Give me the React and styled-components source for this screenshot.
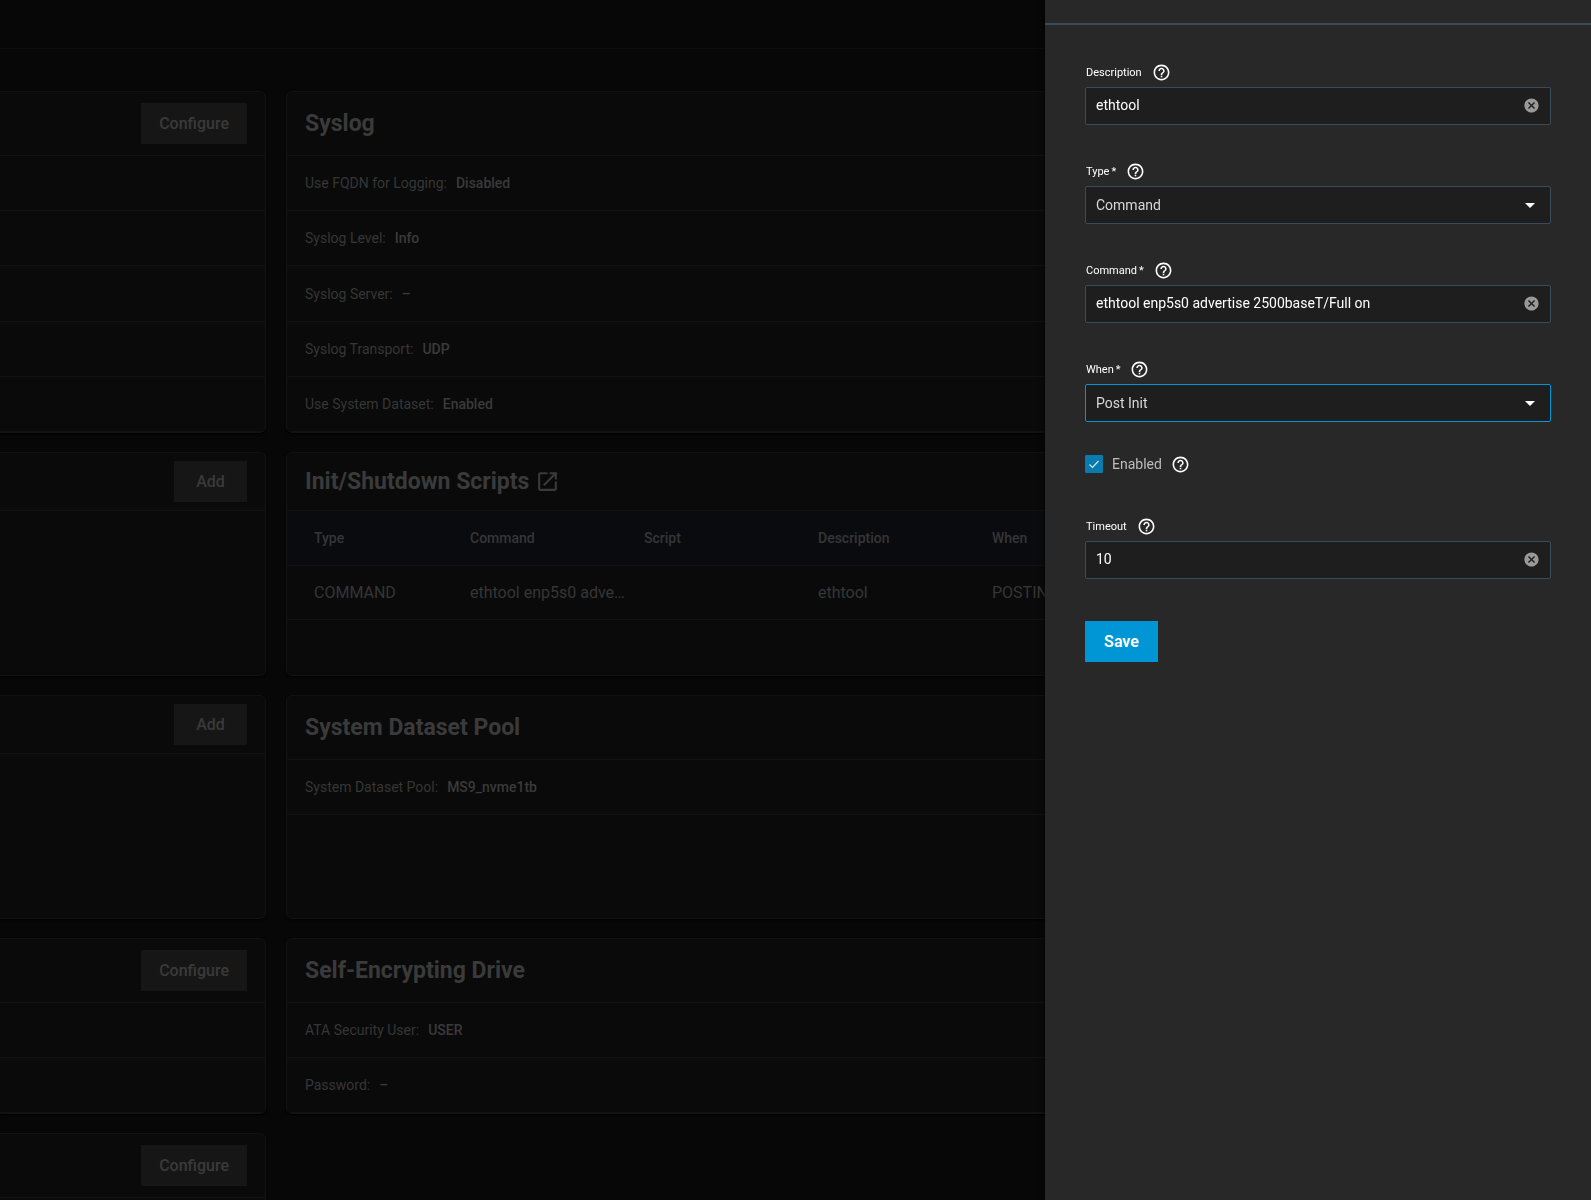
import { useState } from 'react';
import styled, { createGlobalStyle, ThemeProvider } from 'styled-components';
import { MdArrowDropDown, MdCancel, MdHelpOutline, MdOpenInNew } from 'react-icons/md';

const theme = {
	page: '#070707',
	card: '#0a0a0a',
	line: '#111213',
	tableHead: '#0a0b0e',
	muted: '#363636',
	strong: '#3a3a3a',
	button: '#161616',
	panel: '#282828',
	field: '#1e1e1e',
	fieldBorder: '#3a4c58',
	primary: '#0095d5',
};

const GlobalStyle = createGlobalStyle`
	*, *::before, *::after {
		box-sizing: border-box;
	}

	body {
		margin: 0;
		background: ${theme.page};
		font-family: Roboto, 'Liberation Sans', sans-serif;
		font-size: 14px;
	}

	button, input, select {
		font-family: inherit;
	}
`;

const Page = styled.div`
	height: 100vh;
	overflow: hidden;
	background: ${(props) => props.theme.page};
	color: ${(props) => props.theme.muted};
`;

const TopBar = styled.header`
	height: 49px;
	border-bottom: 1px solid #0d0d0d;
`;

const Cards = styled.main`
	display: grid;
	grid-template-columns: 266px 1fr;
	gap: 19px 20px;
	padding: 42px 20px 0 0;
`;

const Card = styled.section`
	display: flex;
	flex-direction: column;
	min-width: 0;
	min-height: ${(props) => props.$minHeight}px;
	background: ${(props) => props.theme.card};
	border: 1px solid ${(props) => props.theme.line};
	border-left-width: ${(props) => (props.$side ? 0 : 1)}px;
	border-radius: ${(props) => (props.$side ? '0 6px 6px 0' : '6px')};
	box-shadow: 0 1px 2px #000;
	overflow: hidden;
`;

const CardHeader = styled.div`
	display: flex;
	align-items: center;
	justify-content: ${(props) => (props.$end ? 'flex-end' : 'flex-start')};
	height: ${(props) => (props.$compact ? 58 : 64)}px;
	flex-shrink: 0;
	padding: 0 18px;
	border-bottom: 1px solid ${(props) => props.theme.line};
`;

const CardTitle = styled.h3`
	margin: 0;
	color: ${(props) => props.theme.strong};
	font-size: 23px;
	font-weight: 700;
	line-height: 32px;
`;

const TitleLink = styled.a`
	display: flex;
	align-items: center;
	gap: 6px;
	color: inherit;
	text-decoration: none;
`;

const Button = styled.button`
	height: 41px;
	min-width: 73px;
	padding: 0 18px;
	border: 0;
	background: ${(props) => (props.$primary ? props.theme.primary : props.theme.button)};
	color: ${(props) => (props.$primary ? '#ffffff' : props.theme.strong)};
	font-size: 16px;
	font-weight: ${(props) => (props.$primary ? 600 : 500)};
	cursor: pointer;
`;

const List = styled.ul`
	display: flex;
	flex-direction: column;
	flex: ${(props) => (props.$fill ? 1 : 'none')};
	margin: 0;
	padding: 0;
	list-style: none;
`;

const ListItem = styled.li`
	display: flex;
	align-items: center;
	gap: 9px;
	flex: 1 0 auto;
	min-height: 55px;
	padding: 0 18px;
	border-bottom: 1px solid ${(props) => props.theme.line};
`;

const Value = styled.span`
	color: ${(props) => props.theme.strong};
	font-weight: 500;
`;

const Table = styled.table`
	width: 100%;
	table-layout: fixed;
	border-collapse: collapse;
	text-align: left;
`;

const Th = styled.th`
	width: 174px;
	height: 54px;
	padding: 0 9px;
	background: ${(props) => props.theme.tableHead};
	border-bottom: 1px solid ${(props) => props.theme.line};
	font-weight: 500;

	&:first-child {
		padding-left: 27px;
	}

	&:last-child {
		width: auto;
	}
`;

const Td = styled.td`
	height: 54px;
	padding: 0 9px;
	border-bottom: 1px solid ${(props) => props.theme.line};
	font-size: 16px;
	overflow: hidden;
	text-overflow: ellipsis;
	white-space: nowrap;

	&:first-child {
		padding-left: 27px;
	}
`;

const Drawer = styled.aside`
	position: fixed;
	top: 0;
	right: 0;
	bottom: 0;
	width: 546px;
	max-width: 100%;
	overflow: hidden;
	background: ${(props) => props.theme.panel};
	box-shadow: 0 0 4px #000;
`;

const DrawerHeader = styled.div`
	height: 25px;
	border-bottom: 2px solid ${(props) => props.theme.fieldBorder};
`;

const Form = styled.form`
	display: flex;
	flex-direction: column;
	align-items: stretch;
	gap: 33px;
	padding: 34px 40px 40px;
`;

const LabelRow = styled.div`
	display: flex;
	align-items: center;
	gap: 10px;
	height: 26px;
	margin-bottom: 2px;
	padding-left: 1px;
	color: #ffffff;
`;

const Label = styled.label`
	font-size: 11px;
`;

const Required = styled.span`
	margin-left: 2px;
`;

const HelpButton = styled.button`
	display: flex;
	padding: 0;
	border: 0;
	background: none;
	color: #ffffff;
	font-size: 19px;
	cursor: pointer;
`;

const Control = styled.div`
	position: relative;
	height: 38px;
	background: ${(props) => props.theme.field};
	border: 1px solid ${(props) => (props.$active ? props.theme.primary : props.theme.fieldBorder)};
	border-radius: 2px;
`;

const Input = styled.input`
	width: 100%;
	height: 100%;
	padding: 0 36px 3px 10px;
	border: 0;
	outline: 0;
	background: none;
	color: #ffffff;
	font-size: 14px;
`;

const Select = styled.select`
	width: 100%;
	height: 100%;
	padding: 0 36px 1px 10px;
	border: 0;
	outline: 0;
	appearance: none;
	background: none;
	color: #d8d8d8;
	font-size: 14px;
`;

const ClearButton = styled.button`
	position: absolute;
	top: 9px;
	right: 10px;
	display: flex;
	padding: 0;
	border: 0;
	background: none;
	color: #999999;
	font-size: 17px;
	cursor: pointer;
`;

const Arrow = styled(MdArrowDropDown)`
	position: absolute;
	top: 6px;
	right: 8px;
	color: #ffffff;
	font-size: 24px;
	pointer-events: none;
`;

const CheckboxRow = styled.div`
	display: flex;
	align-items: center;
	gap: 9px;
	height: 18px;
	margin-bottom: 7px;
`;

const CheckboxBox = styled.span`
	position: relative;
	display: flex;

	svg {
		position: absolute;
		inset: 0;
		pointer-events: none;
	}
`;

const Checkbox = styled.input`
	width: 18px;
	height: 18px;
	margin: 0;
	appearance: none;
	border: 1px solid ${(props) => (props.checked ? '#0a7bae' : props.theme.fieldBorder)};
	border-radius: 1px;
	background: ${(props) => (props.checked ? '#0a7bae' : 'transparent')};
`;

const CheckboxLabel = styled.label`
	color: #bdbdbd;
	font-size: 14px;
`;

const Actions = styled.div`
	display: flex;
	padding-top: 9px;
`;

const syslog = [
	['Use FQDN for Logging', 'Disabled'],
	['Syslog Level', 'Info'],
	['Syslog Server', '–'],
	['Syslog Transport', 'UDP'],
	['Use System Dataset', 'Enabled'],
];

const scripts = [{ type: 'COMMAND', command: 'ethtool enp5s0 advertise 2500baseT/Full on', script: '', description: 'ethtool', when: 'POSTINIT' }];

const SideCard = ({ action, minHeight, compact, rows = 0 }) => (
	<Card $side $minHeight={minHeight}>
		<CardHeader $end $compact={compact}>
			<Button type="button">{action}</Button>
		</CardHeader>
		{rows > 0 && (
			<List $fill>
				{Array.from({ length: rows }, (_, i) => (
					<ListItem key={i} />
				))}
			</List>
		)}
	</Card>
);

const InfoCard = ({ title, items, minHeight, fill }) => (
	<Card $minHeight={minHeight}>
		<CardHeader>
			<CardTitle>{title}</CardTitle>
		</CardHeader>
		<List $fill={fill}>
			{items.map(([label, value]) => (
				<ListItem key={label}>
					<span>{label}:</span>
					<Value>{value}</Value>
				</ListItem>
			))}
		</List>
	</Card>
);

const ScriptsCard = () => (
	<Card $minHeight={224}>
		<CardHeader $compact>
			<CardTitle>
				<TitleLink href="#scripts">
					Init/Shutdown Scripts
					<MdOpenInNew size={25} />
				</TitleLink>
			</CardTitle>
		</CardHeader>
		<Table>
			<thead>
				<tr>
					<Th>Type</Th>
					<Th>Command</Th>
					<Th>Script</Th>
					<Th>Description</Th>
					<Th>When</Th>
				</tr>
			</thead>
			<tbody>
				{scripts.map((row) => (
					<tr key={row.command}>
						<Td>{row.type}</Td>
						<Td>{row.command}</Td>
						<Td>{row.script}</Td>
						<Td>{row.description}</Td>
						<Td>{row.when}</Td>
					</tr>
				))}
			</tbody>
		</Table>
	</Card>
);

const Help = () => (
	<HelpButton type="button" aria-label="Help">
		<MdHelpOutline />
	</HelpButton>
);

const Field = ({ id, label, required, active, children }) => (
	<div>
		<LabelRow>
			<Label htmlFor={id}>
				{label}
				{required && <Required>*</Required>}
			</Label>
			<Help />
		</LabelRow>
		<Control $active={active}>{children}</Control>
	</div>
);

const TextField = ({ id, label, required, value, onChange }) => (
	<Field id={id} label={label} required={required}>
		<Input id={id} value={value} onChange={(e) => onChange(id, e.target.value)} />
		<ClearButton type="button" aria-label="Clear" onClick={() => onChange(id, '')}>
			<MdCancel />
		</ClearButton>
	</Field>
);

const SelectField = ({ id, label, active, value, options, onChange }) => (
	<Field id={id} label={label} required active={active}>
		<Select id={id} value={value} onChange={(e) => onChange(id, e.target.value)}>
			{options.map((option) => (
				<option key={option}>{option}</option>
			))}
		</Select>
		<Arrow />
	</Field>
);

const ScriptForm = () => {
	const [values, setValues] = useState({
		description: 'ethtool',
		type: 'Command',
		command: 'ethtool enp5s0 advertise 2500baseT/Full on',
		when: 'Post Init',
		enabled: true,
		timeout: '10',
	});

	const handleChange = (key, value) => setValues({ ...values, [key]: value });

	return (
		<Form onSubmit={(e) => e.preventDefault()}>
			<TextField id="description" label="Description" value={values.description} onChange={handleChange} />
			<SelectField id="type" label="Type" value={values.type} options={['Command', 'Script']} onChange={handleChange} />
			<TextField id="command" label="Command" required value={values.command} onChange={handleChange} />
			<SelectField
				id="when"
				label="When"
				active
				value={values.when}
				options={['Pre Init', 'Post Init', 'Shutdown']}
				onChange={handleChange}
			/>
			<CheckboxRow>
				<CheckboxBox>
					<Checkbox
						id="enabled"
						type="checkbox"
						checked={values.enabled}
						onChange={(e) => handleChange('enabled', e.target.checked)}
					/>
					{values.enabled && (
						<svg width="18" height="18" viewBox="0 0 18 18" fill="none" stroke="#d5e6ee" strokeWidth="1.2">
							<path d="M4.5 9.5l3 3 6-6.5" />
						</svg>
					)}
				</CheckboxBox>
				<CheckboxLabel htmlFor="enabled">Enabled</CheckboxLabel>
				<Help />
			</CheckboxRow>
			<TextField id="timeout" label="Timeout" value={values.timeout} onChange={handleChange} />
			<Actions>
				<Button $primary type="submit">
					Save
				</Button>
			</Actions>
		</Form>
	);
};

const App = () => (
	<ThemeProvider theme={theme}>
		<GlobalStyle />
		<Page>
			<TopBar />
			<Cards>
				<SideCard action="Configure" minHeight={342} rows={5} />
				<InfoCard title="Syslog" items={syslog} minHeight={342} fill />
				<SideCard action="Add" minHeight={224} compact />
				<ScriptsCard />
				<SideCard action="Add" minHeight={224} compact />
				<InfoCard title="System Dataset Pool" items={[['System Dataset Pool', 'MS9_nvme1tb']]} minHeight={224} />
				<SideCard action="Configure" minHeight={176} rows={2} />
				<InfoCard
					title="Self-Encrypting Drive"
					items={[
						['ATA Security User', 'USER'],
						['Password', '–'],
					]}
					minHeight={176}
					fill
				/>
				<SideCard action="Configure" minHeight={176} rows={2} />
			</Cards>
		</Page>
		<Drawer>
			<DrawerHeader />
			<ScriptForm />
		</Drawer>
	</ThemeProvider>
);

export default App;
